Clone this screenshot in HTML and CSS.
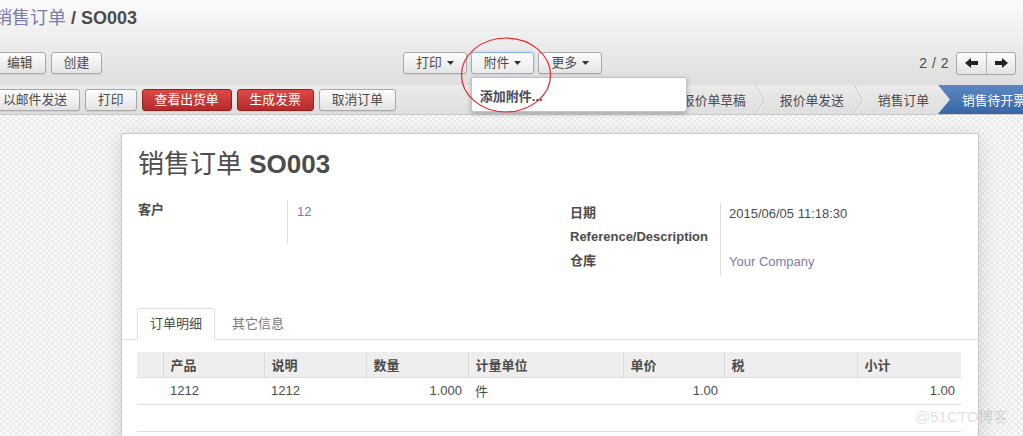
FILE: index.html
```html
<!DOCTYPE html>
<html lang="zh">
<head>
<meta charset="utf-8">
<title>销售订单 SO003</title>
<link rel="stylesheet" href="styles.css">
</head>
<body>
<div class="header">
  <div class="title"><span class="crumb">销售订单</span> <b>/ SO003</b></div>
  <div class="toolbar">
    <div class="group tb-left">
      <button class="btn">编辑</button>
      <button class="btn">创建</button>
    </div>
    <div class="group tb-center">
      <button class="btn">打印<svg class="caret" width="7" height="4" viewBox="0 0 7 4"><polygon points="0,0 7,0 3.5,4" fill="#333"/></svg></button>
      <div class="dd">
        <button class="btn focus">附件<svg class="caret" width="7" height="4" viewBox="0 0 7 4"><polygon points="0,0 7,0 3.5,4" fill="#333"/></svg></button>
        <div class="menu">添加附件...</div>
      </div>
      <button class="btn">更多<svg class="caret" width="7" height="4" viewBox="0 0 7 4"><polygon points="0,0 7,0 3.5,4" fill="#333"/></svg></button>
    </div>
    <div class="tb-right">
      <span class="pager-val">2 / 2</span>
      <div class="pager-btns">
        <button class="pbtn"><svg width="13" height="10" viewBox="0 0 13 10"><polygon points="0,5 6,0 6,3 13,3 13,7 6,7 6,10" fill="#222"/></svg></button>
        <button class="pbtn"><svg width="13" height="10" viewBox="0 0 13 10"><polygon points="13,5 7,0 7,3 0,3 0,7 7,7 7,10" fill="#222"/></svg></button>
      </div>
    </div>
  </div>
</div>

<div class="statusbar">
  <div class="group sb-left">
    <button class="btn">以邮件发送</button>
    <button class="btn">打印</button>
    <button class="btn red">查看出货单</button>
    <button class="btn red">生成发票</button>
    <button class="btn">取消订单</button>
  </div>
  <ul class="steps">
    <li class="step"><span>报价单草稿</span><svg class="chev" viewBox="0 0 11 29" preserveAspectRatio="none"><polyline points="0,0 9,14.5 0,29" fill="none" stroke="#c4c4c4" stroke-width="1"/><polyline points="1.2,0 10.2,14.5 1.2,29" fill="none" stroke="#f6f6f6" stroke-width="1"/></svg></li>
    <li class="step"><span>报价单发送</span><svg class="chev" viewBox="0 0 11 29" preserveAspectRatio="none"><polyline points="0,0 9,14.5 0,29" fill="none" stroke="#c4c4c4" stroke-width="1"/><polyline points="1.2,0 10.2,14.5 1.2,29" fill="none" stroke="#f6f6f6" stroke-width="1"/></svg></li>
    <li class="step"><span>销售订单</span></li>
    <li class="step active"><span>销售待开票</span></li>
  </ul>
</div>

<div class="content">
  <div class="sheet">
    <h1 class="sheet-title"><span class="t-cn">销售订单</span> <b>SO003</b></h1>
    <div class="fields">
      <div class="fgroup">
        <div class="frow tall">
          <div class="flabel">客户</div>
          <div class="fval link">12</div>
        </div>
      </div>
      <div class="fgroup right">
        <div class="frow">
          <div class="flabel">日期</div>
          <div class="fval">2015/06/05 11:18:30</div>
        </div>
        <div class="frow">
          <div class="flabel">Reference/Description</div>
          <div class="fval"></div>
        </div>
        <div class="frow">
          <div class="flabel">仓库</div>
          <div class="fval link">Your Company</div>
        </div>
      </div>
    </div>

    <ul class="tabs">
      <li class="tab active">订单明细</li>
      <li class="tab">其它信息</li>
    </ul>

    <table class="lines">
      <colgroup>
        <col class="c0"><col class="c1"><col class="c2"><col class="c3"><col class="c4"><col class="c5"><col class="c6"><col class="c7">
      </colgroup>
      <thead>
        <tr><th></th><th>产品</th><th>说明</th><th>数量</th><th>计量单位</th><th>单价</th><th>税</th><th>小计</th></tr>
      </thead>
      <tbody>
        <tr><td></td><td>1212</td><td>1212</td><td class="num">1.000</td><td>件</td><td class="num">1.00</td><td></td><td class="num">1.00</td></tr>
        <tr class="empty"><td></td><td></td><td></td><td></td><td></td><td></td><td></td><td></td></tr>
      </tbody>
    </table>
  </div>
</div>

<svg class="annot" width="94" height="80" viewBox="0 0 94 80"><ellipse cx="46" cy="39" rx="44.5" ry="37" fill="none" stroke="#e8242a" stroke-width="1.2"/></svg>
<div class="watermark">@51CTO博客</div>
</body>
</html>
```

FILE: styles.css
```css
* { box-sizing: border-box; }
html, body { margin: 0; padding: 0; }
body {
  position: relative;
  width: 1023px;
  height: 436px;
  overflow: hidden;
  font-family: "Liberation Sans", "Noto Sans CJK SC", sans-serif;
  font-size: 13px;
  color: #4c4c4c;
  background-color: #f3f3f3;
  background-image: repeating-conic-gradient(#ececec 0 25%, #f9f9f9 0 50%);
  background-size: 6px 6px;
}

/* ---------- header ---------- */
.header {
  height: 85px;
  padding-top: 7px;
  background: linear-gradient(#fbfbfb, #dedede);
}
.title {
  margin-left: -6px;
  font-size: 18px;
  line-height: 22px;
  white-space: nowrap;
}
.title .crumb { color: #7c7bad; }
.title b { color: #4c4c4c; }

.toolbar {
  display: flex;
  align-items: center;
  height: 22px;
  margin-top: 23px;
}
.group { display: flex; gap: 5px; }
.tb-left { margin-left: -6px; }
.tb-center { margin-left: 301px; gap: 4px; }
.tb-right {
  margin-left: auto;
  margin-right: 7px;
  display: flex;
  align-items: center;
  gap: 7px;
}
.pager-val { font-size: 14px; letter-spacing: 0.5px; }

.btn {
  height: 22px;
  padding: 0 12px;
  border: 1px solid #a8a8a8;
  border-radius: 3px;
  background: linear-gradient(#fdfdfd, #e3e3e3);
  box-shadow: 0 1px 1px rgba(0,0,0,0.08);
  font-family: inherit;
  font-size: 12.8px;
  line-height: 20px;
  color: #4c4c4c;
  display: inline-flex;
  align-items: center;
  white-space: nowrap;
  cursor: pointer;
}
.btn.focus {
  border-color: #86b3e6;
  background: linear-gradient(#ffffff, #eaeaea);
  box-shadow: 0 0 2px rgba(82,150,230,0.45);
}
.btn.red {
  color: #fff;
  border-color: #8e2020;
  background: linear-gradient(#dc4a47, #b52b2b);
}
.caret {
  display: block;
  margin-left: 5px;
  flex: none;
}

.dd { position: relative; }
.menu {
  position: absolute;
  left: 0;
  top: 25px;
  z-index: 10;
  width: 216px;
  height: 35px;
  padding: 11px 0 0 8px;
  background: #fff;
  border: 1px solid #c2c2c2;
  border-radius: 0 0 3px 3px;
  box-shadow: 0 2px 5px rgba(0,0,0,0.25);
  font-weight: bold;
  font-size: 13px;
  line-height: 16px;
  color: #4a4a58;
  white-space: nowrap;
}

.pager-btns {
  display: flex;
  height: 23px;
  border: 1px solid #a8a8a8;
  border-radius: 3px;
  background: linear-gradient(#fdfdfd, #e3e3e3);
  overflow: hidden;
}
.pbtn {
  width: 29px;
  height: 100%;
  padding: 0;
  border: 0;
  background: transparent;
  display: flex;
  align-items: center;
  justify-content: center;
}
.pbtn + .pbtn { border-left: 1px solid #b4b4b4; }

/* ---------- status bar ---------- */
.statusbar {
  height: 30px;
  display: flex;
  align-items: center;
  background: linear-gradient(#ebebeb, #dedede);
  border-bottom: 1px solid #cacaca;
}
.sb-left { margin-left: -10px; }
.steps {
  display: flex;
  align-self: stretch;
  margin: 0 -18px 0 auto;
  padding: 0;
  list-style: none;
}
.step {
  display: flex;
  align-items: center;
  white-space: nowrap;
  font-size: 12.8px;
  color: #4c4c4c;
}
.step .chev {
  width: 11px;
  height: 100%;
  margin: 0 13px 0 10px;
}
.step.active {
  margin-left: 9px;
  padding: 0 15px 0 24px;
  color: #fff;
  background: linear-gradient(#5c87c4, #3866a5);
  clip-path: polygon(0 0, 100% 0, 100% 100%, 0 100%, 12px 50%);
}

/* ---------- sheet ---------- */
.content { padding: 18px 0 0 121px; }
.sheet {
  width: 858px;
  min-height: 340px;
  padding: 14px 16px 0;
  background: #fff;
  border: 1px solid #c8c8d4;
  box-shadow: 0 4px 20px rgba(0,0,0,0.15);
}
.sheet-title {
  margin: 0;
  font-size: 26px;
  line-height: 32px;
  font-weight: normal;
  color: #4c4c4c;
  white-space: nowrap;
}
.sheet-title b { font-weight: bold; }

.fields {
  display: grid;
  grid-template-columns: 1fr 1fr;
  column-gap: 40px;
  margin-top: 20px;
  align-items: start;
}
.fgroup.right { margin-top: 3px; }
.frow { display: flex; min-height: 24px; }
.frow.tall { min-height: 43px; }
.flabel {
  width: 149px;
  flex: none;
  font-weight: bold;
  line-height: 20px;
  white-space: nowrap;
}
.right .flabel { width: 150px; }
.fval {
  flex: 1;
  border-left: 1px solid #dcdcdc;
  padding: 3px 0 0 9px;
  line-height: 18px;
}
.right .fval { padding: 1px 0 0 8px; line-height: 20px; }
.link { color: #7c7bad; }

.tabs {
  display: flex;
  margin: 33px -16px 0;
  padding: 0 0 0 15px;
  list-style: none;
  border-bottom: 1px solid #dddddd;
  height: 32px;
}
.tab {
  padding: 0 16px 0 16px;
  line-height: 30px;
  margin-bottom: -1px;
  color: #7a7a7a;
  border: 1px solid transparent;
  border-radius: 4px 4px 0 0;
}
.tab.active {
  padding: 0 12px;
  color: #4c4c4c;
  background: #fff;
  border-color: #dddddd #dddddd #fff;
}

.lines {
  width: 824px;
  margin: 12px 0 0 -1px;
  border-collapse: collapse;
  table-layout: fixed;
}
.c0 { width: 26px; }
.c1 { width: 101px; }
.c2 { width: 102px; }
.c3 { width: 102px; }
.c4 { width: 155px; }
.c5 { width: 101px; }
.c6 { width: 133px; }
.c7 { width: 104px; }
.lines th {
  height: 25px;
  padding: 0 8px 0 7px;
  background: #eeeeee;
  border-bottom: 1px solid #dddddd;
  text-align: left;
  font-weight: bold;
  white-space: nowrap;
}
.lines th + th { border-left: 1px solid #dcdcdc; }
.lines td {
  height: 27px;
  padding: 0 8px 0 7px;
  border-bottom: 1px solid #dddddd;
  white-space: nowrap;
}
.lines td.num { text-align: right; padding-right: 6px; }

/* ---------- overlays ---------- */
.annot {
  position: absolute;
  left: 460px;
  top: 36px;
  z-index: 20;
}
.watermark {
  position: absolute;
  left: 915px;
  top: 408px;
  font-size: 15px;
  line-height: 18px;
  color: rgba(0,0,0,0.14);
  white-space: nowrap;
  z-index: 5;
}
```
